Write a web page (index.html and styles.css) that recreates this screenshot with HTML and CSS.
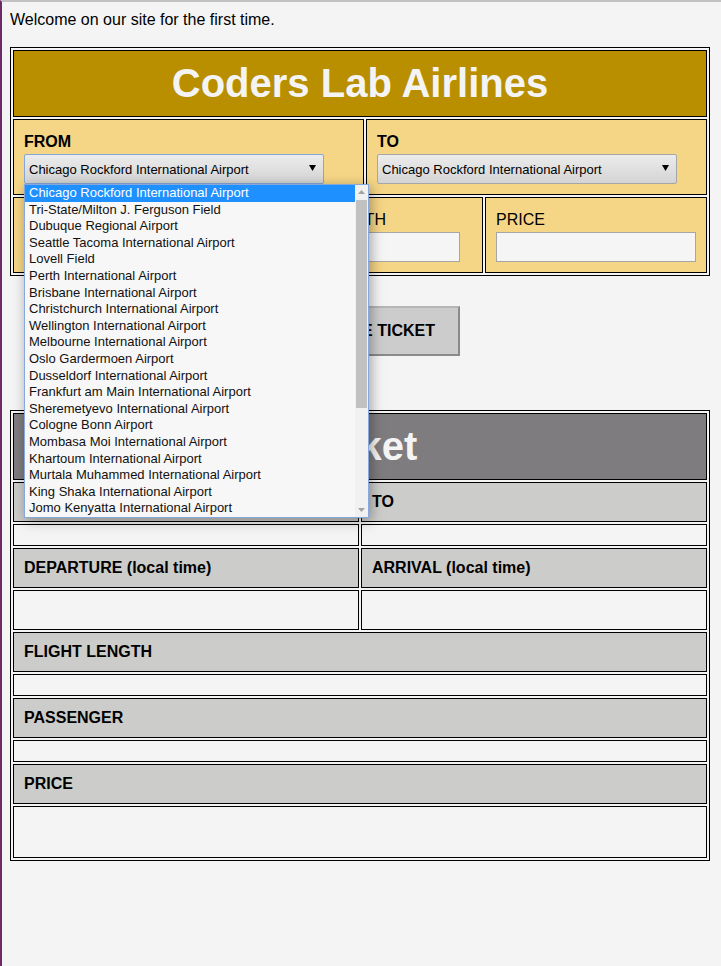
FILE: index.html
```html
<!DOCTYPE html>
<html lang="en">
<head>
<meta charset="utf-8">
<title>Coders Lab Airlines</title>
<link rel="stylesheet" href="styles.css">
</head>
<body>
<div class="welcome">Welcome on our site for the first time.</div>

<form class="booking">
  <div class="frame">
    <div class="cell title-cell"><h1 class="title">Coders Lab Airlines</h1></div>

    <div class="row row-route">
      <div class="cell gold">
        <div class="lbl lbl-bold">FROM</div>
        <div class="select-wrap">
          <div class="select select-focused">
            <span class="select-text">Chicago Rockford International Airport</span>
            <svg class="arrow" width="7" height="6" viewBox="0 0 7 6"><polygon points="0,0 7,0 3.5,6" fill="#000"/></svg>
          </div>
          <div class="dropdown">
            <ul class="options">
              <li class="opt opt-active">Chicago Rockford International Airport</li>
              <li class="opt">Tri-State/Milton J. Ferguson Field</li>
              <li class="opt">Dubuque Regional Airport</li>
              <li class="opt">Seattle Tacoma International Airport</li>
              <li class="opt">Lovell Field</li>
              <li class="opt">Perth International Airport</li>
              <li class="opt">Brisbane International Airport</li>
              <li class="opt">Christchurch International Airport</li>
              <li class="opt">Wellington International Airport</li>
              <li class="opt">Melbourne International Airport</li>
              <li class="opt">Oslo Gardermoen Airport</li>
              <li class="opt">Dusseldorf International Airport</li>
              <li class="opt">Frankfurt am Main International Airport</li>
              <li class="opt">Sheremetyevo International Airport</li>
              <li class="opt">Cologne Bonn Airport</li>
              <li class="opt">Mombasa Moi International Airport</li>
              <li class="opt">Khartoum International Airport</li>
              <li class="opt">Murtala Muhammed International Airport</li>
              <li class="opt">King Shaka International Airport</li>
              <li class="opt">Jomo Kenyatta International Airport</li>
            </ul>
            <div class="scrollbar">
              <svg class="sb-arrow" width="13" height="15" viewBox="0 0 13 15"><polygon points="3,9 10,9 6.5,5" fill="#a3a3a3"/></svg>
              <div class="sb-track"><div class="sb-thumb"></div></div>
              <svg class="sb-arrow" width="13" height="15" viewBox="0 0 13 15"><polygon points="3,6 10,6 6.5,10" fill="#a3a3a3"/></svg>
            </div>
          </div>
        </div>
      </div>
      <div class="cell gold">
        <div class="lbl lbl-bold">TO</div>
        <div class="select">
          <span class="select-text">Chicago Rockford International Airport</span>
          <svg class="arrow" width="7" height="6" viewBox="0 0 7 6"><polygon points="0,0 7,0 3.5,6" fill="#000"/></svg>
        </div>
      </div>
    </div>

    <div class="row row-details">
      <div class="cell gold">
        <div class="lbl">DEPARTURE</div>
        <input class="field" type="text">
      </div>
      <div class="cell gold">
        <div class="lbl">FLIGHT LENGTH</div>
        <input class="field" type="text">
      </div>
      <div class="cell gold">
        <div class="lbl">PRICE</div>
        <input class="field" type="text">
      </div>
    </div>
  </div>

  <div class="actions">
    <button class="btn" type="button">GENERATE TICKET</button>
  </div>
</form>

<div class="frame ticket">
  <div class="cell title-cell title-gray"><h2 class="title">Ticket</h2></div>
  <div class="row row-half">
    <div class="cell head">FROM</div>
    <div class="cell head">TO</div>
  </div>
  <div class="row row-half">
    <div class="cell value"></div>
    <div class="cell value"></div>
  </div>
  <div class="row row-half">
    <div class="cell head">DEPARTURE (local time)</div>
    <div class="cell head">ARRIVAL (local time)</div>
  </div>
  <div class="row row-half">
    <div class="cell value value-line"></div>
    <div class="cell value value-line"></div>
  </div>
  <div class="cell head">FLIGHT LENGTH</div>
  <div class="cell value"></div>
  <div class="cell head">PASSENGER</div>
  <div class="cell value"></div>
  <div class="cell head">PRICE</div>
  <div class="cell value value-price"></div>
</div>
</body>
</html>
```

FILE: styles.css
```css
html {
  min-height: 100%;
  box-sizing: border-box;
  border-top: 2px solid #c2c2c2;
  border-left: 2px solid #6d2a68;
  background: #f4f4f4;
}

body {
  margin: 8px;
  font-family: "Liberation Sans", Arial, sans-serif;
  font-size: 16px;
  line-height: 18px;
  color: #000;
}

.welcome {
  padding-top: 1px;
  margin-bottom: 18px;
}

.booking {
  margin: 0;
}

.frame {
  width: 700px;
  box-sizing: border-box;
  border: 1px solid #000;
  padding: 2px;
  display: flex;
  flex-direction: column;
  gap: 2px;
}

.row {
  display: grid;
  gap: 2px;
}

.row-route {
  grid-template-columns: 351px 341px;
}

.row-details {
  grid-template-columns: 234px 234px 222px;
}

.row-half {
  grid-template-columns: 346px 346px;
}

.cell {
  border: 1px solid #000;
  padding: 10px;
  min-width: 0;
}

.title-cell {
  background: #b98f00;
  text-align: center;
}

.title-gray {
  background: #7f7c7f;
}

.title {
  margin: 0;
  font-size: 40px;
  line-height: 45px;
  font-weight: bold;
  color: #f4f4f4;
}

.gold {
  background: #f5d586;
}

.lbl {
  padding-top: 3px;
  margin-bottom: 3px;
}

.lbl-bold {
  font-weight: bold;
}

.select-wrap {
  position: relative;
  z-index: 10;
  width: 300px;
}

.select {
  width: 300px;
  height: 30px;
  box-sizing: border-box;
  border: 1px solid #a6a6a6;
  border-radius: 2px;
  background: linear-gradient(#ececec, #d4d4d4);
  display: flex;
  align-items: center;
  justify-content: space-between;
  padding: 0 7px 0 4px;
  font-size: 13px;
  line-height: 15px;
}

.select-focused {
  border-color: #86a7d9;
}

.arrow {
  display: block;
  margin-top: -2px;
}

.dropdown {
  position: absolute;
  left: 0;
  top: 100%;
  width: 345px;
  box-sizing: border-box;
  border: 1px solid #86a8dc;
  background: #f7f7f7;
  display: flex;
  box-shadow: 2px 3px 12px rgba(0, 0, 0, 0.35);
}

.options {
  list-style: none;
  margin: 0;
  padding: 0;
  flex: 1;
  min-width: 0;
}

.opt {
  height: 16.6px;
  line-height: 16.6px;
  font-size: 13px;
  padding-left: 4px;
  white-space: nowrap;
  color: #111;
}

.opt-active {
  background: #1e90ff;
  color: #fff;
}

.scrollbar {
  width: 13px;
  display: flex;
  flex-direction: column;
  background: #f1f1f1;
}

.sb-arrow {
  display: block;
  flex: none;
}

.sb-track {
  flex: 1;
  padding: 0 1px;
}

.sb-thumb {
  height: 208px;
  background: #c1c1c1;
}

.field {
  display: block;
  width: 200px;
  height: 30px;
  box-sizing: border-box;
  margin: 0;
  border: 1px solid #a6a6a6;
  background: #f5f5f5;
  padding: 0 4px;
  font: inherit;
}

.actions {
  width: 700px;
  text-align: center;
  margin: 30px 0 54px;
}

.btn {
  font-family: "Liberation Sans", Arial, sans-serif;
  font-size: 16px;
  line-height: 18px;
  font-weight: bold;
  color: #000;
  background: #cccccc;
  border: 2px solid;
  border-color: #b5b5b5 #8a8a8a #8a8a8a #b5b5b5;
  padding: 14px 22px;
  margin: 0;
  width: 200px;
}

.head {
  background: #cccccb;
  font-weight: bold;
}

.value {
  background: #f4f4f4;
}

.value-line {
  min-height: 18px;
}

.value-price {
  min-height: 30px;
}
```
